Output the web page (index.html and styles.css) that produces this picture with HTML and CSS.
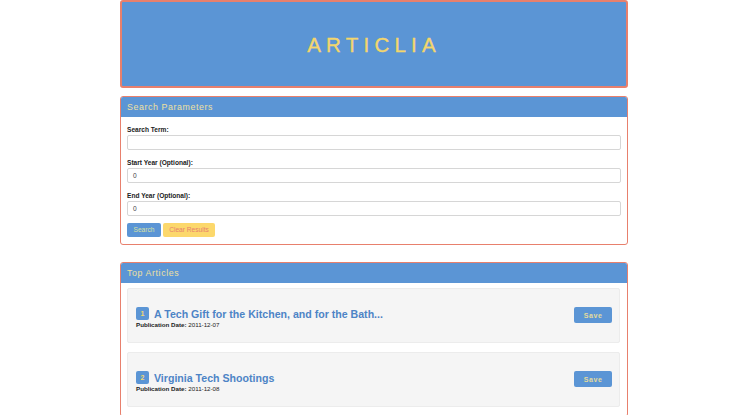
FILE: index.html
```html
<!DOCTYPE html>
<html>
<head>
<meta charset="utf-8">
<link rel="stylesheet" href="styles.css">
</head>
<body>
<div class="container">
  <div class="jumbotron"><h1 class="brand">ARTICLIA</h1></div>

  <div class="panel">
    <div class="panel-heading">Search Parameters</div>
    <div class="panel-body search-body">
      <div class="group">
        <label class="label">Search Term:</label>
        <div class="input"></div>
      </div>
      <div class="group">
        <label class="label">Start Year (Optional):</label>
        <div class="input">0</div>
      </div>
      <div class="group last">
        <label class="label">End Year (Optional):</label>
        <div class="input">0</div>
      </div>
      <div class="buttons">
        <button class="btn btn-search">Search</button>
        <button class="btn btn-clear">Clear Results</button>
      </div>
    </div>
  </div>

  <div class="panel panel-second">
    <div class="panel-heading">Top Articles</div>
    <div class="panel-body articles-body">
      <div class="card">
        <div class="card-main">
          <div class="card-title"><span class="badge">1</span><span class="title-text">A Tech Gift for the Kitchen, and for the Bath...</span></div>
          <div class="pub"><b>Publication Date:</b> 2011-12-07</div>
        </div>
        <button class="btn-save">Save</button>
      </div>
      <div class="card">
        <div class="card-main">
          <div class="card-title"><span class="badge">2</span><span class="title-text">Virginia Tech Shootings</span></div>
          <div class="pub"><b>Publication Date:</b> 2011-12-08</div>
        </div>
        <button class="btn-save">Save</button>
      </div>
    </div>
  </div>
</div>
</body>
</html>
```

FILE: styles.css
```css
* { box-sizing: border-box; }
body {
  margin: 0;
  background: #ffffff;
  font-family: "Liberation Sans", Arial, sans-serif;
  color: #333;
}
.container {
  width: 508px;
  margin: 0 0 0 calc(50% - 255px);
}
.jumbotron {
  height: 88px;
  background: #5b95d5;
  border: 2px solid #e8806d;
  border-radius: 3px;
  display: flex;
  align-items: center;
  justify-content: center;
}
.brand {
  margin: 0;
  font-size: 20.5px;
  font-weight: normal;
  letter-spacing: 5.2px;
  color: #f3d66c;
  line-height: 1;
  padding-top: 2px;
  -webkit-text-stroke: 0.35px #f3d66c;
}
.panel {
  margin-top: 8px;
  border: 1px solid #e8806d;
  border-radius: 3px;
  background: #fff;
}
.panel-second {
  margin-top: 17px;
}
.panel-heading {
  height: 20px;
  background: #5b95d5;
  color: #efe0a0;
  font-size: 8.8px;
  letter-spacing: 0.6px;
  padding: 0 6px;
  line-height: 20px;
  border-radius: 2px 2px 0 0;
}
.search-body {
  padding: 8px 6px 7px 6px;
}
.group {
  margin-bottom: 8px;
}
.group.last {
  margin-bottom: 7px;
}
.label {
  display: block;
  font-size: 6.6px;
  font-weight: bold;
  line-height: 9px;
  margin-bottom: 1px;
  color: #222;
}
.input {
  height: 15px;
  border: 1px solid #d6d6d6;
  border-radius: 2px;
  font-size: 6.6px;
  line-height: 13px;
  padding-left: 5px;
  color: #444444;
}
.buttons {
  display: flex;
  gap: 2px;
}
.btn {
  height: 14px;
  border: none;
  border-radius: 2px;
  font-family: "Liberation Sans", Arial, sans-serif;
  font-size: 6.6px;
  padding: 0 6px;
  line-height: 14px;
  cursor: pointer;
}
.btn-search {
  width: 34px;
  background: #5b95d5;
  color: #d8e2a4;
}
.btn-clear {
  width: 52px;
  background: #fcd86c;
  color: #e8806d;
}
.articles-body {
  padding: 5px 7px 0 6px;
}
.card {
  height: 55px;
  background: #f5f5f5;
  border: 1px solid #ececec;
  border-radius: 2px;
  margin-bottom: 9px;
  display: flex;
  justify-content: space-between;
  align-items: flex-start;
  padding: 0 7px 0 8px;
}
.card-main {
  padding-top: 17px;
}
.card-title {
  display: flex;
  align-items: center;
  height: 15px;
}
.badge {
  width: 13px;
  height: 13px;
  background: #5b95d5;
  color: #f3d870;
  border-radius: 2px;
  font-size: 7px;
  font-weight: bold;
  display: flex;
  align-items: center;
  justify-content: center;
  margin-right: 5px;
}
.title-text {
  font-size: 10.6px;
  font-weight: bold;
  color: #4d84c6;
}
.pub {
  font-size: 6.2px;
  line-height: 8px;
  color: #222;
}
.btn-save {
  margin-top: 18px;
  width: 38px;
  height: 16px;
  border: none;
  border-radius: 2px;
  background: #5b95d5;
  color: #e3dc9c;
  font-family: "Liberation Sans", Arial, sans-serif;
  font-size: 7px;
  font-weight: bold;
  letter-spacing: 0.6px;
  padding: 0;
}
```
